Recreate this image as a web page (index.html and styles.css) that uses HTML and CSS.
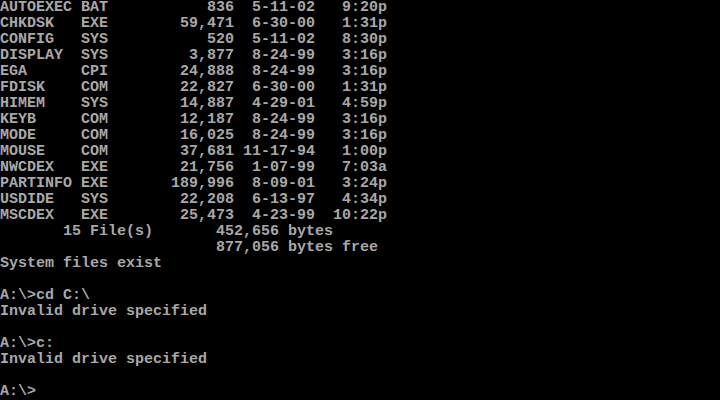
FILE: index.html
```html
<!DOCTYPE html>
<html lang="en">
<head>
  <meta charset="UTF-8">
  <meta name="viewport" content="width=device-width, initial-scale=1.0">
  <link rel="stylesheet" href="styles.css">
  <title>MS-DOS Prompt</title>
</head>
<body>
  <div class="screen">
<pre class="console">AUTOEXEC BAT           836  5-11-02   9:20p
CHKDSK   EXE        59,471  6-30-00   1:31p
CONFIG   SYS           520  5-11-02   8:30p
DISPLAY  SYS         3,877  8-24-99   3:16p
EGA      CPI        24,888  8-24-99   3:16p
FDISK    COM        22,827  6-30-00   1:31p
HIMEM    SYS        14,887  4-29-01   4:59p
KEYB     COM        12,187  8-24-99   3:16p
MODE     COM        16,025  8-24-99   3:16p
MOUSE    COM        37,681 11-17-94   1:00p
NWCDEX   EXE        21,756  1-07-99   7:03a
PARTINFO EXE       189,996  8-09-01   3:24p
USDIDE   SYS        22,208  6-13-97   4:34p
MSCDEX   EXE        25,473  4-23-99  10:22p
       15 File(s)       452,656 bytes
                        877,056 bytes free
System files exist

A:\&gt;cd C:\
Invalid drive specified

A:\&gt;c:
Invalid drive specified

A:\&gt;</pre>
  </div>
</body>
</html>
```

FILE: styles.css
```css
*{
  margin: 0;
  padding: 0;
}
body{
  background-color: #000;
  width: 720px;
  height: 400px;
  overflow: hidden;
}
.screen{
  width: 720px;
  height: 400px;
  background-color: #000;
}
.console{
  font-family: 'Liberation Mono', 'DejaVu Sans Mono', monospace;
  font-size: 15px;
  font-weight: bold;
  line-height: 16px;
  color: #a8a8a8;
  white-space: pre;
}
```
